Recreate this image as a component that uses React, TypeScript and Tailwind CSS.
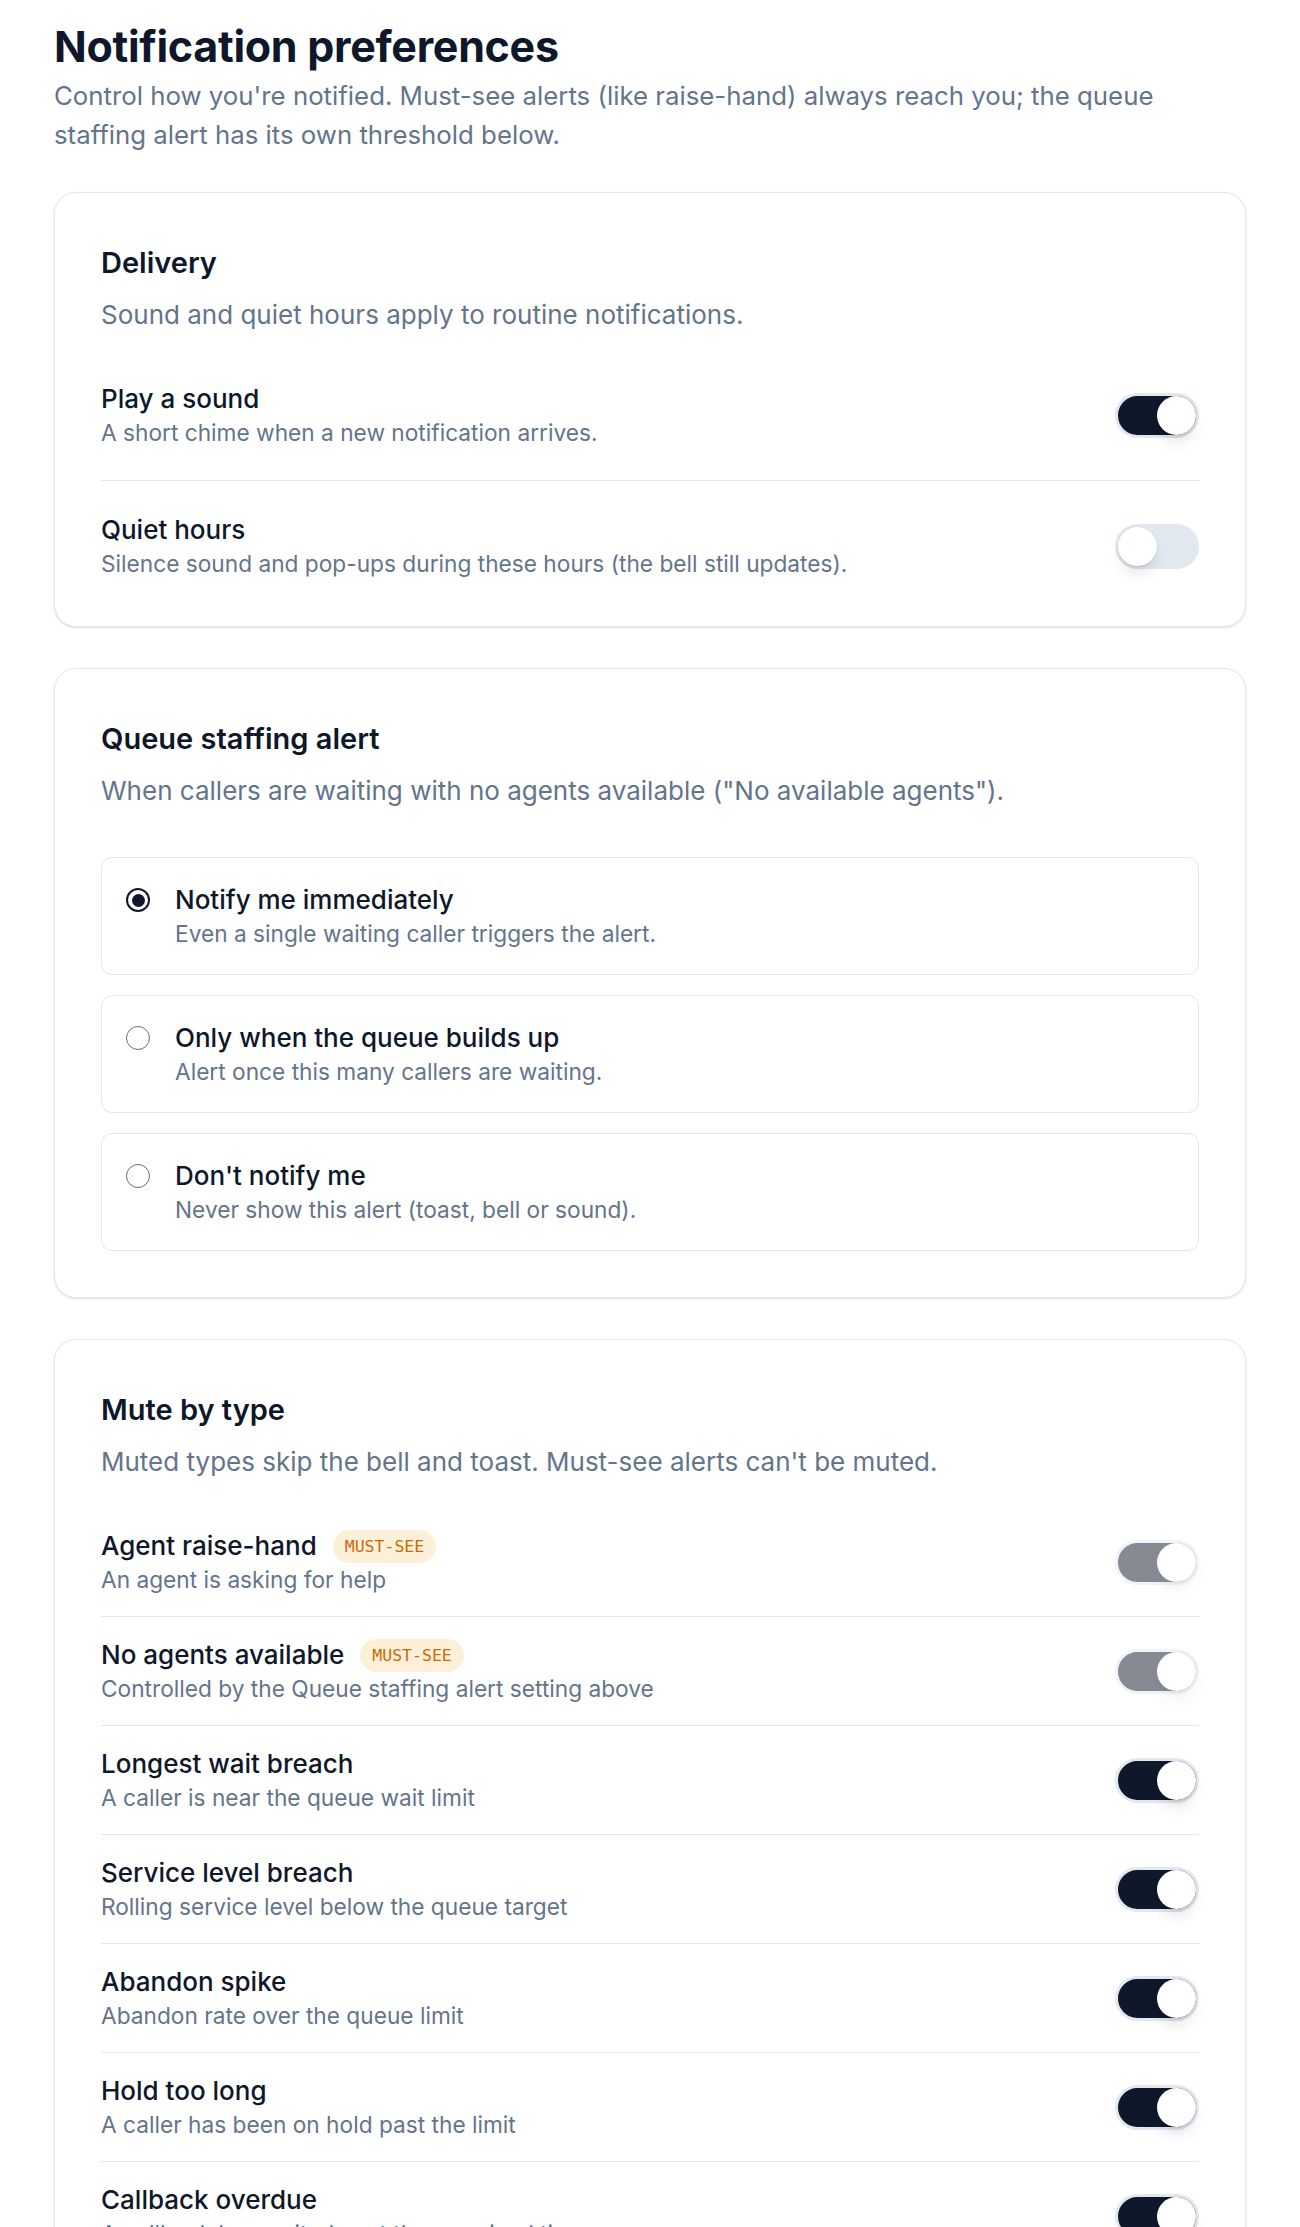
import { useState } from 'react';

type AlertType = { id: string; label: string; hint: string; mustSee?: boolean };

const alertTypes: AlertType[] = [
  { id: 'raise-hand', label: 'Agent raise-hand', hint: 'An agent is asking for help', mustSee: true },
  { id: 'no-agents', label: 'No agents available', hint: 'Controlled by the Queue staffing alert setting above', mustSee: true },
  { id: 'longest-wait', label: 'Longest wait breach', hint: 'A caller is near the queue wait limit' },
  { id: 'service-level', label: 'Service level breach', hint: 'Rolling service level below the queue target' },
  { id: 'abandon', label: 'Abandon spike', hint: 'Abandon rate over the queue limit' },
  { id: 'hold', label: 'Hold too long', hint: 'A caller has been on hold past the limit' },
  { id: 'callback', label: 'Callback overdue', hint: 'A callback has waited past the promised time' },
];

const staffingOptions = [
  { id: 'immediate', label: 'Notify me immediately', hint: 'Even a single waiting caller triggers the alert.' },
  { id: 'threshold', label: 'Only when the queue builds up', hint: 'Alert once this many callers are waiting.' },
  { id: 'off', label: "Don't notify me", hint: 'Never show this alert (toast, bell or sound).' },
];

function Toggle({ on, disabled, onChange }: { on: boolean; disabled?: boolean; onChange?: () => void }) {
  return (
    <button
      type="button"
      role="switch"
      aria-checked={on}
      disabled={disabled}
      onClick={onChange}
      className={`flex h-[45px] w-[84px] shrink-0 items-center rounded-full border-[3px] border-[#e2e8f0] ${on ? 'bg-[#0f172a]' : 'bg-[#e2e8f0]'} ${disabled ? 'opacity-50' : 'cursor-pointer'}`}
    >
      <span
        className={`block h-[39px] w-[39px] rounded-full bg-white shadow-lg ring-1 ring-black/5 transition-transform ${on ? 'translate-x-[39px]' : 'translate-x-0'}`}
      />
    </button>
  );
}

function Card({ title, hint, children }: { title: string; hint: string; children: React.ReactNode }) {
  return (
    <section className="rounded-[22px] border border-[#e2e8f0] bg-white px-[46px] pt-[50px] pb-[46px] shadow-sm">
      <h2 className="text-[29px] font-semibold leading-[40px] text-[#0f172a]">{title}</h2>
      <p className="mt-[12px] text-[26px] leading-[40px] text-[#64748b]">{hint}</p>
      <div className="mt-[46px]">{children}</div>
    </section>
  );
}

function RowText({ label, hint, mustSee }: { label: string; hint: string; mustSee?: boolean }) {
  return (
    <div className="min-w-0">
      <div className="flex items-center gap-[16px]">
        <span className="text-[26px] font-medium leading-[36px] text-[#0f172a]">{label}</span>
        {mustSee && (
          <span className="rounded-full bg-[#fdf0d9] px-[12px] font-['DejaVu_Sans_Mono',monospace] text-[16.5px] leading-[33px] text-[#cc6a06]">
            MUST-SEE
          </span>
        )}
      </div>
      <p className="text-[22.7px] leading-[32px] text-[#64748b]">{hint}</p>
    </div>
  );
}

export default function App() {
  const [sound, setSound] = useState(true);
  const [quiet, setQuiet] = useState(false);
  const [staffing, setStaffing] = useState('immediate');
  const [muted, setMuted] = useState<Record<string, boolean>>({});

  return (
    <main className="min-h-screen bg-white px-[54px] pt-[21px] pb-[60px] font-['Inter',sans-serif] text-[#0f172a]">
      <h1 className="text-[43px] font-bold leading-[50px] tracking-[-0.3px]">Notification preferences</h1>
      <p className="mt-[5px] max-w-[1170px] text-[25.8px] leading-[39px] text-[#64748b]">
        Control how you're notified. Must-see alerts (like raise-hand) always reach you; the queue staffing alert has
        its own threshold below.
      </p>

      <div className="mt-[38px] flex flex-col gap-[41px]">
        <Card title="Delivery" hint="Sound and quiet hours apply to routine notifications.">
          <div className="divide-y divide-[#e2e8f0]">
            <div className="flex items-center justify-between gap-6 pb-[31px]">
              <RowText label="Play a sound" hint="A short chime when a new notification arrives." />
              <Toggle on={sound} onChange={() => setSound(!sound)} />
            </div>
            <div className="flex items-center justify-between gap-6 pt-[31px]">
              <RowText label="Quiet hours" hint="Silence sound and pop-ups during these hours (the bell still updates)." />
              <Toggle on={quiet} onChange={() => setQuiet(!quiet)} />
            </div>
          </div>
        </Card>

        <Card title="Queue staffing alert" hint={'When callers are waiting with no agents available ("No available agents").'}>
          <div className="flex flex-col gap-[20px]">
            {staffingOptions.map((opt) => {
              const checked = staffing === opt.id;
              return (
                <label
                  key={opt.id}
                  className="flex cursor-pointer items-start gap-[25px] rounded-[11px] border border-[#e2e8f0] p-[24px]"
                  onClick={() => setStaffing(opt.id)}
                >
                  <span
                    className={`mt-[6px] flex h-[24px] w-[24px] shrink-0 items-center justify-center rounded-full ${checked ? 'border-[2.5px] border-[#0f172a]' : 'border-[1.5px] border-[#6b6b6b]'}`}
                  >
                    {checked && <span className="h-[13px] w-[13px] rounded-full bg-[#0f172a]" />}
                  </span>
                  <span className="block">
                    <span className="block text-[26px] font-medium leading-[36px] text-[#0f172a]">{opt.label}</span>
                    <span className="block text-[22.7px] leading-[32px] text-[#64748b]">{opt.hint}</span>
                  </span>
                </label>
              );
            })}
          </div>
        </Card>

        <Card title="Mute by type" hint="Muted types skip the bell and toast. Must-see alerts can't be muted.">
          <div className="divide-y divide-[#e2e8f0]">
            {alertTypes.map((t) => (
              <div key={t.id} className="flex items-center justify-between gap-6 py-[20px] first:pt-0 last:pb-0">
                <RowText label={t.label} hint={t.hint} mustSee={t.mustSee} />
                <Toggle
                  on={t.mustSee ? true : !muted[t.id]}
                  disabled={t.mustSee}
                  onChange={() => setMuted({ ...muted, [t.id]: !muted[t.id] })}
                />
              </div>
            ))}
          </div>
        </Card>
      </div>
    </main>
  );
}
